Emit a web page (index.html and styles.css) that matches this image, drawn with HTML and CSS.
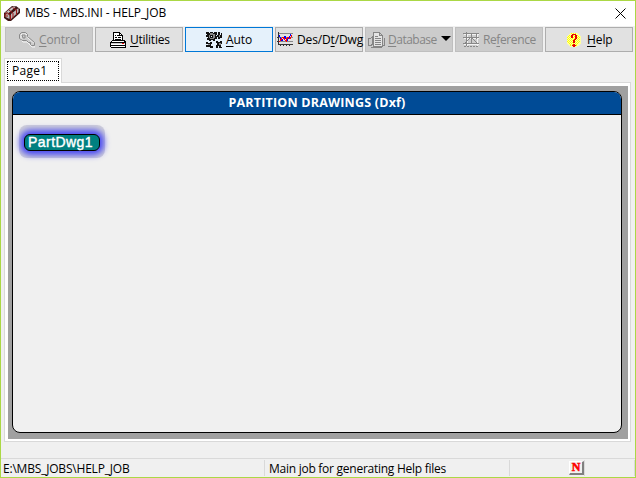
FILE: index.html
```html
<!DOCTYPE html>
<html lang="en"><head><meta charset="utf-8"><title>MBS - MBS.INI - HELP_JOB</title>
<link rel="stylesheet" href="styles.css"></head>
<body>
<div class="window">
<header class="titlebar">
<svg class="app-icon" width="16" height="16" viewBox="0 0 16 16"><path fill="#3c1515" d="M0 8l8-7h4l4 3v4l-9 8H4L0 13z"/><path fill="#c8c4c4" d="M1 8l8-6.500h3l-8 7z"/><path fill="#bdb7b7" d="M1.500 9.500l2-1 2 2V14l-4-2zM7 9l7.500-6V7L7 14z"/><path fill="none" stroke="#991818" d="M1 12V9l2-1.500L6.500 10v5M5 5l4 3v5M8.500 2.500l4 2.500v5M3 12V9.500"/></svg>
<span class="title">MBS - MBS.INI - HELP_JOB</span>
<svg class="close" width="11" height="11" viewBox="0 0 11 11"><path d="M.5.5l10 10M10.500.5l-10 10" fill="none" stroke="#000"/></svg>
</header>
<nav class="toolbar">
<button class="btn control disabled"><svg width="16" height="16" viewBox="0 0 16 16"><path d="M2 1h4l2 2v2l7 6v3h-3l-5-5H3L1 7V2z" fill="none" stroke="#f4f4f4" transform="translate(1 1)"/><path d="M2.500.5h4l2 2v2l7 6v3h-3l-1-1v-2h-2l-2-2H3.500l-3-2v-4zM3 3l3 0v3H4z" fill="none" stroke="#8a8a8a"/></svg><span><u>C</u>ontrol</span></button>
<button class="btn utilities"><svg width="16" height="16" viewBox="0 0 16 16" shape-rendering="crispEdges"><path d="M3.500 8.500v-8h6l3 3v5" fill="#fff" stroke="#000"/><path d="M9.500.5v3h3M5 3.500h1m1 0h2M5 5.500h2m1 0h3M5 7.500h6" fill="none" stroke="#000"/><path d="M2 8h12l2 2v5l-1 1H1l-1-1v-5z" fill="#000"/><path d="M2 9h12v1H2zM1 11h14v2H1zM1 14h14v1H1z" fill="#fff"/><path d="M1 11h14v1H1z" fill="#ccc"/><path d="M12 11h2v1h-2z" fill="#e00"/></svg><span><u>U</u>tilities</span></button>
<button class="btn auto active"><svg width="17" height="16" viewBox="0 0 17 16" shape-rendering="crispEdges"><path fill="#111" d="M0 0h3v1h1V0h3v1h1V0h3v3h-1v1h1v3H9v2H7V8H5v1H3V8H1V6h1V5H0V3h1V2H0zM12 0h2v3h1V1h1v5h-2v1h-2V5h-1V3h1zM0 10h2v1h2v-1h2v2H5v2h2v2H4v-1H0v-2h2v-1H0zM10 9h2v1h2V9h2v3h-1v3h1v1h-3v-2h-1v2h-2v-3h1v-2h-1z"/><path fill="#888" d="M4 1h3v1h2v4H8v1H4V6H3V3h1zM13 3h1v2h-1zM2 12h2v1H2zM13 11h2v2h-2z"/><path fill="#111" d="M4 3h3v3H4z"/><path fill="#e5f1fb" d="M5 4h1v1H5z"/></svg><span><u>A</u>uto</span></button>
<button class="btn design"><svg width="16" height="15" viewBox="0 0 16 15" shape-rendering="crispEdges"><path d="M1 1.500h15M1 5.500h15M1 9.500h15" stroke="#888"/><path d="M1.500 0v12.500H16M3.500 12v2M6.500 12v2M9.500 12v2M12.500 12v2M0 5.500h1M0 9.500h1" fill="none" stroke="#333"/><path d="M2 3l3 6 3-5 2 5 4-7" fill="none" stroke="#00f"/><path d="M2 10l4-5 3 4 2-4 2 2 2-4M9 6v4" fill="none" stroke="#f00"/></svg><span>Des/D<u>t</u>/Dwg</span></button>
<button class="btn database disabled"><svg width="17" height="16" viewBox="0 0 17 16" shape-rendering="crispEdges"><g fill="none" stroke="#858585"><path fill="#e4e4e4" d="M5.500.5h6l3 3v11h-9zM11.500.5v3h3M7 4.500h3M7 6.500h6M7 8.500h6M7 10.500h6M7 12.500h6"/><path fill="#ccc" d="M.5 6.500h2l2-2v8l-2 1h-2z"/><path d="M3 15.500h10l3-2v-8"/></g></svg><span><u>D</u>atabase</span><i class="arrow"></i></button>
<button class="btn reference disabled"><svg width="16" height="15" viewBox="0 0 16 15" shape-rendering="crispEdges"><path d="M1 2.500h15M1 6.500h15M1 12.500h15M4.500 1v13M14.500 1v13" stroke="#f2f2f2"/><path d="M0 1.500h16M3.500 0v14M0 5.500h16M0 11.500h16M8.500 2v10M2 11l6-6 6 6M1 14.500h2m1 0h2m1 0h2m1 0h2m1 0h2M13.500 1v6" fill="none" stroke="#888"/></svg><span>Re<u>f</u>erence</span></button>
<button class="btn help"><svg width="16" height="16" viewBox="0 0 16 16" shape-rendering="crispEdges"><circle cx="8" cy="8" r="7.500" fill="#ffffa0"/><path stroke="#ff0" stroke-dasharray="1 1" d="M5 1.500h6M3 3.500h10M1 5.500h14M1 7.500h14M1 9.500h14M3 11.500h10M4 13.500h8M2 4.500h12M2 6.500h12M2 8.500h12M2 10.500h12M4 12.500h8"/><path fill="#e80000" d="M6 2h4v1h1v4h-1v1H9v3H7V8h1V7h1V3H7v3H5V3h1zM7 12h2v1h1v1H9v1H7v-1H6v-1h1z"/></svg><span><u>H</u>elp</span></button>
</nav>
<main class="pages">
<div class="tab"><span class="tab-label">Page1</span></div>
<section class="page"><div class="frame"><div class="group"><h1><span>PARTITION DRAWINGS (Dxf)</span></h1><div class="content"><div class="glow"><button class="part"><span>PartDwg1</span></button></div></div></div></div></section>
</main>
<footer class="status"><div class="path"><span>E:\MBS_JOBS\HELP_JOB</span></div><div class="message"><span>Main job for generating Help files</span></div><div class="indicator"><b>N</b></div><div class="last"></div></footer>
</div>
</body></html>
```
FILE: styles.css
```css
*{box-sizing:border-box}
body{margin:0;font:12px/16px "Open Sans",sans-serif;color:#000;overflow:hidden}
button{font:inherit;color:inherit;padding:0}
svg{display:block;flex:none}
.window{width:636px;height:478px;border:1px solid #abd845;background:#f0f0f0;display:flex;flex-direction:column}
.titlebar{height:25px;flex:none;background:#fff;display:flex;align-items:center;padding:0 9px 0 3px}
.app-icon{margin-top:-2px}
.title{margin-left:5px;letter-spacing:-.12px;white-space:nowrap;margin-top:-1px}
.close{margin-left:auto}
.toolbar{display:flex;gap:2px;padding:1px 0 0 4px;height:32px;flex:none}
.btn{width:88px;height:25px;border:1px solid #adadad;background:#e1e1e1;display:flex;align-items:center;flex:none;white-space:nowrap;letter-spacing:-.1px}
.btn u{text-underline-offset:2px}
.btn.disabled{background:#ccc;border-color:#bfbfbf;color:#858585}
.btn.active{background:#e5f1fb;border-color:#0078d7}
.btn span{margin-left:4px}
.control{padding-left:13px}
.utilities{padding-left:14px}
.utilities span{letter-spacing:-.25px}
.auto{padding-left:20px}
.auto span{margin-left:3px}
.design{padding-left:1px}
.design span{letter-spacing:-.15px}
.database{padding-left:2px}
.database span{margin-left:3px;letter-spacing:-.5px}
.reference{padding-left:7px}
.reference span{letter-spacing:-.4px}
.help{padding-left:20px}
.help span{margin-left:5px}
.arrow{margin:-3px 0 0 4px;border:5px solid transparent;border-top-color:#000;border-bottom:0}
.pages{padding:0 4px 0 3px;height:385px;flex:none}
.tab{width:58px;height:25px;background:#fff;border:1px solid #d9d9d9;border-bottom:0;padding:2px;position:relative;z-index:1}
.tab-label{display:block;width:52px;height:20px;border:1px dotted #000;padding-left:4px;line-height:18px;letter-spacing:.3px}
.page{height:360px;margin-top:-1px;background:#fff;border:1px solid #d9d9d9;padding:3px 2px 2px 3px}
.frame{height:353px;width:620px;background:#a0a0a0;padding:5px 6px 6px 4px}
.group{height:342px;border:1px solid #000;border-radius:8px;background:#f0f0f0;overflow:hidden}
h1{height:23px;margin:0;background:#004b96;color:#fff;border-bottom:1px solid #000;font:bold 12.5px/22px "Open Sans",sans-serif;letter-spacing:.2px;text-align:center}
.content{padding:10px 6px}
.glow{width:86px;height:33px;border-radius:8px;padding:9px 5px 7px;background:#d0d0d8}
.part{display:block;width:76px;height:17px;border:1px solid #000;border-radius:6px;background:#008080;color:#fff;font:14px/15px "Liberation Sans",sans-serif;letter-spacing:.45px;box-shadow:0 0 6px 4px #4848f4;-webkit-text-stroke:.4px #fff;white-space:nowrap;text-align:left;padding-left:3px}
.status{height:19px;margin-top:auto;flex:none;border-top:1px solid #d9d9d9;display:flex;padding-top:1px;line-height:17px;white-space:nowrap}
.status>div{border-right:1px solid #d9d9d9;height:16px}
.path{width:264px;padding-left:2px;letter-spacing:-.2px}
.message{width:245px;padding-left:4px;letter-spacing:-.26px}
.indicator{width:75px;display:flex;justify-content:flex-end;align-items:center}
.indicator b{width:15px;height:14px;border:1px solid #fff;border-right:2px solid #808080;border-bottom:2px solid #808080;color:#f00;font:bold 12px/11px "Liberation Serif",serif;text-align:center;-webkit-text-stroke:.5px #f00}
.last{width:50px}
```
